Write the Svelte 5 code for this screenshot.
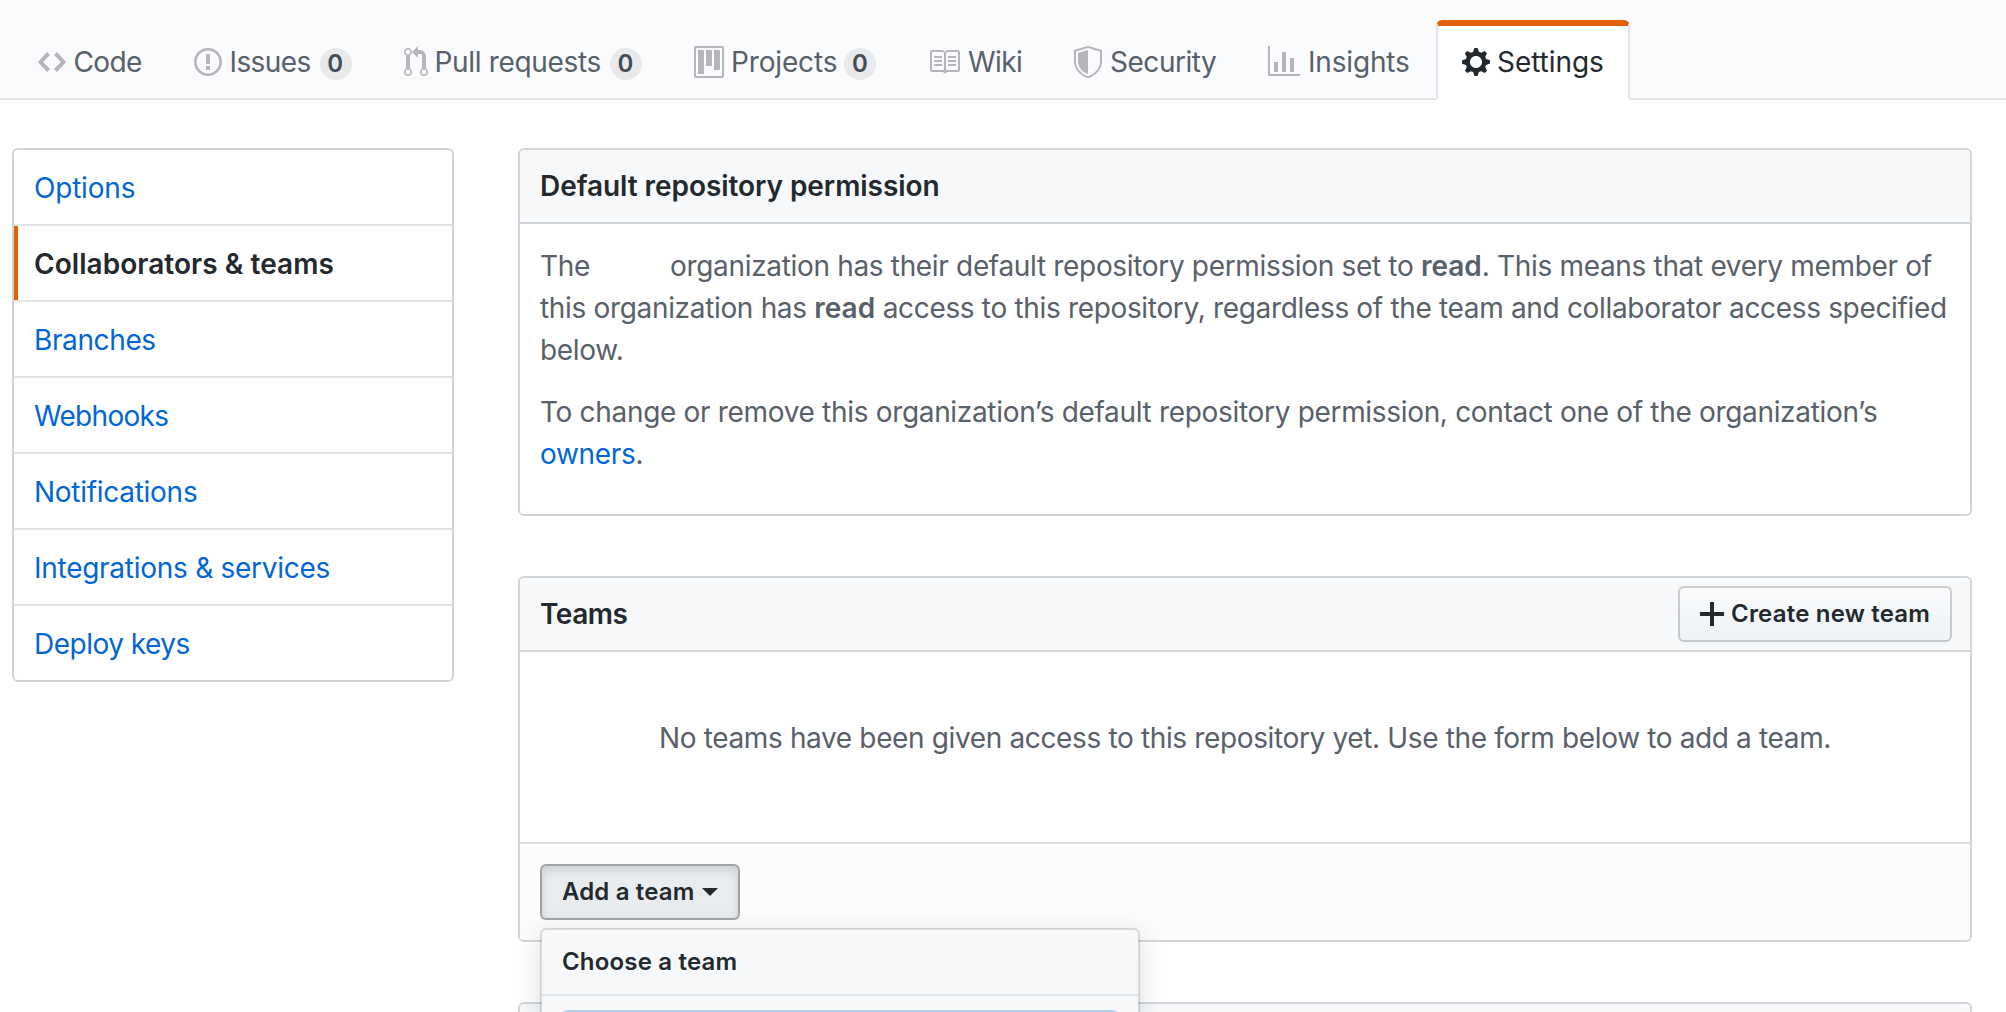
<script>
  const tabs = [
    { id: 'code', label: 'Code', w: 14, d: 'M9.5 3L8 4.5 11.5 8 8 11.5 9.5 13 14 8 9.5 3zm-5 0L0 8l4.5 5L6 11.5 2.5 8 6 4.5 4.5 3z' },
    { id: 'issues', label: 'Issues', count: 0, w: 14, d: 'M7 2.3c3.14 0 5.7 2.56 5.7 5.7s-2.56 5.7-5.7 5.7A5.71 5.71 0 0 1 1.3 8c0-3.14 2.56-5.7 5.7-5.7zM7 1C3.14 1 0 4.14 0 8s3.14 7 7 7 7-3.14 7-7-3.14-7-7-7zm1 3H6v5h2V4zm0 6H6v2h2v-2z' },
    { id: 'pulls', label: 'Pull requests', count: 0, w: 12, d: 'M11 11.28V5c-.03-.78-.34-1.47-.94-2.06C9.46 2.35 8.78 2.03 8 2H7V0L4 3l3 3V4h1c.27.02.48.11.69.31.21.2.3.42.31.69v6.28A1.993 1.993 0 0 0 10 15a1.993 1.993 0 0 0 1-3.72zm-1 2.92c-.66 0-1.2-.55-1.2-1.2 0-.65.55-1.2 1.2-1.2.65 0 1.2.55 1.2 1.2 0 .65-.55 1.2-1.2 1.2zM4 3c0-1.11-.89-2-2-2a1.993 1.993 0 0 0-1 3.72v6.56A1.993 1.993 0 0 0 2 15a1.993 1.993 0 0 0 1-3.72V4.72c.59-.34 1-.98 1-1.72zm-.8 10c0 .66-.55 1.2-1.2 1.2-.65 0-1.2-.55-1.2-1.2 0-.65.55-1.2 1.2-1.2.65 0 1.2.55 1.2 1.2zM2 4.2C1.34 4.2.8 3.65.8 3c0-.65.55-1.2 1.2-1.2.65 0 1.2.55 1.2 1.2 0 .65-.55 1.2-1.2 1.2z' },
    { id: 'projects', label: 'Projects', count: 0, w: 15, d: 'M10 12h3V2h-3v10zm-4-2h3V2H6v8zm-4 4h3V2H2v12zm-1 1h13V1H1v14zM14 0H1a1 1 0 0 0-1 1v14a1 1 0 0 0 1 1h13a1 1 0 0 0 1-1V1a1 1 0 0 0-1-1z' },
    { id: 'wiki', label: 'Wiki', w: 16, d: 'M3 5h4v1H3V5zm0 3h4V7H3v1zm0 2h4V9H3v1zm11-5h-4v1h4V5zm0 2h-4v1h4V7zm0 2h-4v1h4V9zm2-6v9c0 .55-.45 1-1 1H9.5l-1 1-1-1H2c-.55 0-1-.45-1-1V3c0-.55.45-1 1-1h5.5l1 1 1-1H15c.55 0 1 .45 1 1zm-8 .5L7.5 3H2v9h6V3.5zm7-.5H9.5l-.5.5V12h6V3z' },
    { id: 'security', label: 'Security', w: 14, d: 'M0 2l7-2 7 2v6.02C14 12.69 8.69 16 7 16c-1.69 0-7-3.31-7-7.98V2zm1 .75L7 1l6 1.75v5.268C13 12.104 8.449 15 7 15c-1.449 0-6-2.896-6-6.982V2.75zm1 .75L7 2v12c-1.207 0-5-2.482-5-5.985V3.5z' },
    { id: 'insights', label: 'Insights', w: 16, d: 'M16 14v1H0V0h1v14h15zM5 13H3V8h2v5zm4 0H7V3h2v10zm4 0h-2V6h2v7z' },
    { id: 'settings', label: 'Settings', w: 14, selected: true, d: 'M14 8.77v-1.6l-1.94-.64-.45-1.09.88-1.84-1.13-1.13-1.81.91-1.09-.45-.69-1.92h-1.6l-.63 1.94-1.11.45-1.84-.88-1.13 1.13.91 1.81-.45 1.09L0 7.23v1.59l1.94.64.45 1.09-.88 1.84 1.13 1.13 1.81-.91 1.09.45.69 1.92h1.59l.63-1.94 1.11-.45 1.84.88 1.13-1.13-.92-1.81.47-1.09L14 8.75v.02zM7 11c-1.66 0-3-1.34-3-3s1.34-3 3-3 3 1.34 3 3-1.34 3-3 3z' },
  ];
  const menu = [
    { id: 'm-options', label: 'Options' },
    { id: 'm-collab', label: 'Collaborators & teams', selected: true },
    { id: 'm-branches', label: 'Branches' },
    { id: 'm-webhooks', label: 'Webhooks' },
    { id: 'm-notif', label: 'Notifications' },
    { id: 'm-integrations', label: 'Integrations & services' },
    { id: 'm-keys', label: 'Deploy keys' },
  ];
</script>

<div class="page">
  <nav class="tabs">
    {#each tabs as tab}
      <a class="tab {tab.id}" class:selected={tab.selected} href="#{tab.id}">
        <svg width={tab.w * 2} height="32" viewBox="0 0 {tab.w} 16"><path fill-rule="evenodd" d={tab.d} /></svg>
        <span class="label">{tab.label}</span>
        {#if tab.count !== undefined}<span class="counter">{tab.count}</span>{/if}
      </a>
    {/each}
  </nav>

  <div class="columns">
    <aside class="menu">
      {#each menu as item}
        <a class="menu-item {item.id}" class:selected={item.selected} href="#{item.id}">{item.label}</a>
      {/each}
    </aside>

    <main>
      <section class="box permission">
        <header><h3>Default repository permission</h3></header>
        <div class="body">
          <p>The <span class="org"></span> organization has their default repository permission set to <strong>read</strong>. This means that every member of<br />this organization has <strong>read</strong> access to this repository, regardless of the team and collaborator access specified<br />below.</p>
          <p>To change or remove this organization’s default repository permission, contact one of the organization’s<br /><a href="#owners">owners</a>.</p>
        </div>
      </section>

      <section class="box teams">
        <header>
          <h3>Teams</h3>
          <button class="btn create">
            <svg width="24" height="32" viewBox="0 0 12 16"><path d="M12 9H7v5H5V9H0V7h5V2h2v5h5v2z" /></svg>
            <span>Create new team</span>
          </button>
        </header>
        <div class="blank">No teams have been given access to this repository yet. Use the form below to add a team.</div>
        <footer>
          <div class="picker">
            <button class="btn add"><span>Add a team</span><i class="caret"></i></button>
            <div class="dropdown">
              <div class="dropdown-title">Choose a team</div>
              <div class="filter"><div class="field"></div></div>
            </div>
          </div>
        </footer>
      </section>

      <section class="box next"><header></header></section>
    </main>
  </div>
</div>

<style>
  :global(body) {
    margin: 0;
    overflow: hidden;
    background: #fff;
  }
  .page {
    width: 2006px;
    height: 1012px;
    overflow: hidden;
    box-sizing: border-box;
    font: 28px/42px Inter, 'Liberation Sans', sans-serif;
    color: #24292e;
  }
  .page :global(*) {
    box-sizing: border-box;
  }
  a {
    color: #0366d6;
    text-decoration: none;
  }

  .tabs {
    display: flex;
    align-items: flex-end;
    height: 100px;
    padding: 20px 0 0 14px;
    background: #fafbfc;
    box-shadow: inset 0 -2px #e1e4e8;
  }
  .tab {
    display: flex;
    flex: none;
    align-items: center;
    height: 80px;
    padding: 0 22px;
    border: 2px solid transparent;
    border-top-width: 6px;
    border-radius: 6px 6px 0 0;
    color: #586069;
    white-space: nowrap;
  }
  .tab svg {
    flex: none;
    fill: #24292e;
    opacity: 0.32;
  }
  .tab.selected {
    color: #24292e;
    background: #fff;
    border-color: #e36209 #e1e4e8 transparent;
    border-bottom: 2px solid #fff;
  }
  .tab.selected svg {
    opacity: 1;
  }
  .label {
    margin-left: 8px;
  }
  .code { width: 156px; }
  .code .label { margin-left: 7.5px; letter-spacing: -0.6px; }
  .issues { width: 210px; }
  .issues .label { margin-left: 7.5px; letter-spacing: -0.59px; }
  .pulls { width: 290px; }
  .pulls .label { margin-left: 6.5px; letter-spacing: -0.33px; }
  .projects { width: 234px; }
  .projects .label { margin-left: 7px; letter-spacing: -0.15px; }
  .wiki { width: 146px; }
  .wiki .label { letter-spacing: -0.57px; }
  .security { width: 194px; }
  .security .label { letter-spacing: -0.47px; }
  .insights { width: 192px; }
  .insights .label { letter-spacing: -0.17px; }
  .settings { width: 194px; padding-left: 24px; }
  .settings .label { margin-left: 7px; letter-spacing: -0.06px; }
  .counter {
    width: 32px;
    height: 32px;
    margin: 4px 0 0 9px;
    padding-right: 1px;
    border-radius: 16px;
    background: rgba(27, 31, 35, 0.08);
    color: #444d56;
    font-size: 24px;
    font-weight: 600;
    line-height: 32px;
    text-align: center;
  }
  .projects .counter {
    margin-left: 7px;
  }

  .columns {
    display: flex;
    align-items: flex-start;
    gap: 64px;
    padding: 48px 34px 0 12px;
  }
  .menu {
    flex: none;
    width: 442px;
    overflow: hidden;
    border: 2px solid #d1d5da;
    border-radius: 6px;
  }
  .menu-item {
    display: block;
    height: 76px;
    padding: 17px 20px 0;
    border-bottom: 2px solid #e1e4e8;
  }
  .menu-item:last-child {
    height: 74px;
    border-bottom: 0;
  }
  .menu-item.selected {
    color: #24292e;
    font-weight: 600;
    box-shadow: inset 4px 0 #e36209;
  }
  .m-options { letter-spacing: -0.2px; }
  .m-collab { letter-spacing: 0.05px; }
  .m-branches { letter-spacing: -0.38px; }
  .m-webhooks { letter-spacing: -0.7px; }
  .m-notif { letter-spacing: -0.28px; }
  .m-integrations { letter-spacing: -0.27px; }
  .m-keys { letter-spacing: -0.5px; }

  main {
    flex: 1;
    min-width: 0;
  }
  .box {
    border: 2px solid #d1d5da;
    border-radius: 6px;
  }
  .box header {
    display: flex;
    align-items: center;
    justify-content: space-between;
    height: 74px;
    padding: 0 18px 0 20px;
    border-bottom: 2px solid #d1d5da;
    border-radius: 4px 4px 0 0;
    background: #f6f8fa;
  }
  h3 {
    margin: 0;
    font-size: 28px;
    font-weight: 600;
  }
  .permission {
    height: 368px;
    margin-bottom: 60px;
  }
  .permission h3 {
    letter-spacing: -0.06px;
  }
  .permission .body {
    padding: 21px 20px;
    color: #586069;
    letter-spacing: -0.33px;
    white-space: nowrap;
  }
  p {
    margin: 0 0 20px;
  }
  p + p {
    letter-spacing: -0.32px;
  }
  strong {
    font-weight: 600;
    letter-spacing: 0;
  }
  .org {
    display: inline-block;
    width: 65px;
  }

  .teams {
    height: 366px;
    margin-bottom: 60px;
  }
  .teams h3 {
    letter-spacing: -0.5px;
  }
  .blank {
    height: 190px;
    padding-top: 65px;
    color: #586069;
    letter-spacing: -0.36px;
    text-align: center;
  }
  footer {
    height: 98px;
    padding: 20px;
    border-top: 2px solid #ddd;
    border-radius: 0 0 4px 4px;
    background: #fcfcfc;
  }
  .btn {
    display: flex;
    align-items: center;
    height: 56px;
    padding: 0 20px;
    border: 2px solid rgba(27, 31, 35, 0.2);
    border-radius: 6px;
    background: #eff3f6 linear-gradient(180deg, #fafbfc, #eff3f6 90%) -2px -2px / 110% 110%;
    color: #24292e;
    font: 600 24px/40px Inter, 'Liberation Sans', sans-serif;
    white-space: nowrap;
  }
  .create {
    width: 274px;
    letter-spacing: 0.2px;
  }
  .create svg {
    flex: none;
    margin-right: 7px;
    fill: #24292e;
  }
  .add {
    width: 200px;
    border-color: rgba(27, 31, 35, 0.35);
    background: #e9ecef;
    box-shadow: inset 0 4px 8px rgba(27, 31, 35, 0.15);
    letter-spacing: 0.14px;
  }
  .caret {
    margin-left: 8px;
    border: 8px solid transparent;
    border-top-color: #24292e;
    border-bottom: 0;
  }
  .picker {
    position: relative;
  }
  .dropdown {
    position: absolute;
    top: 64px;
    left: 0;
    width: 600px;
    height: 400px;
    border: 2px solid rgba(27, 31, 35, 0.15);
    border-radius: 6px;
    background: #f6f8fa;
    background-clip: padding-box;
    box-shadow: 0 6px 24px rgba(27, 31, 35, 0.15);
  }
  .dropdown-title {
    height: 66px;
    padding: 12px 20px;
    border-bottom: 2px solid #e1e4e8;
    font-size: 24px;
    font-weight: 600;
    line-height: 40px;
    letter-spacing: 0.18px;
  }
  .filter {
    padding: 14px 18px;
  }
  .field {
    height: 60px;
    border: 4px solid #b4d0f0;
    border-radius: 8px;
    background: #fff;
  }
</style>
